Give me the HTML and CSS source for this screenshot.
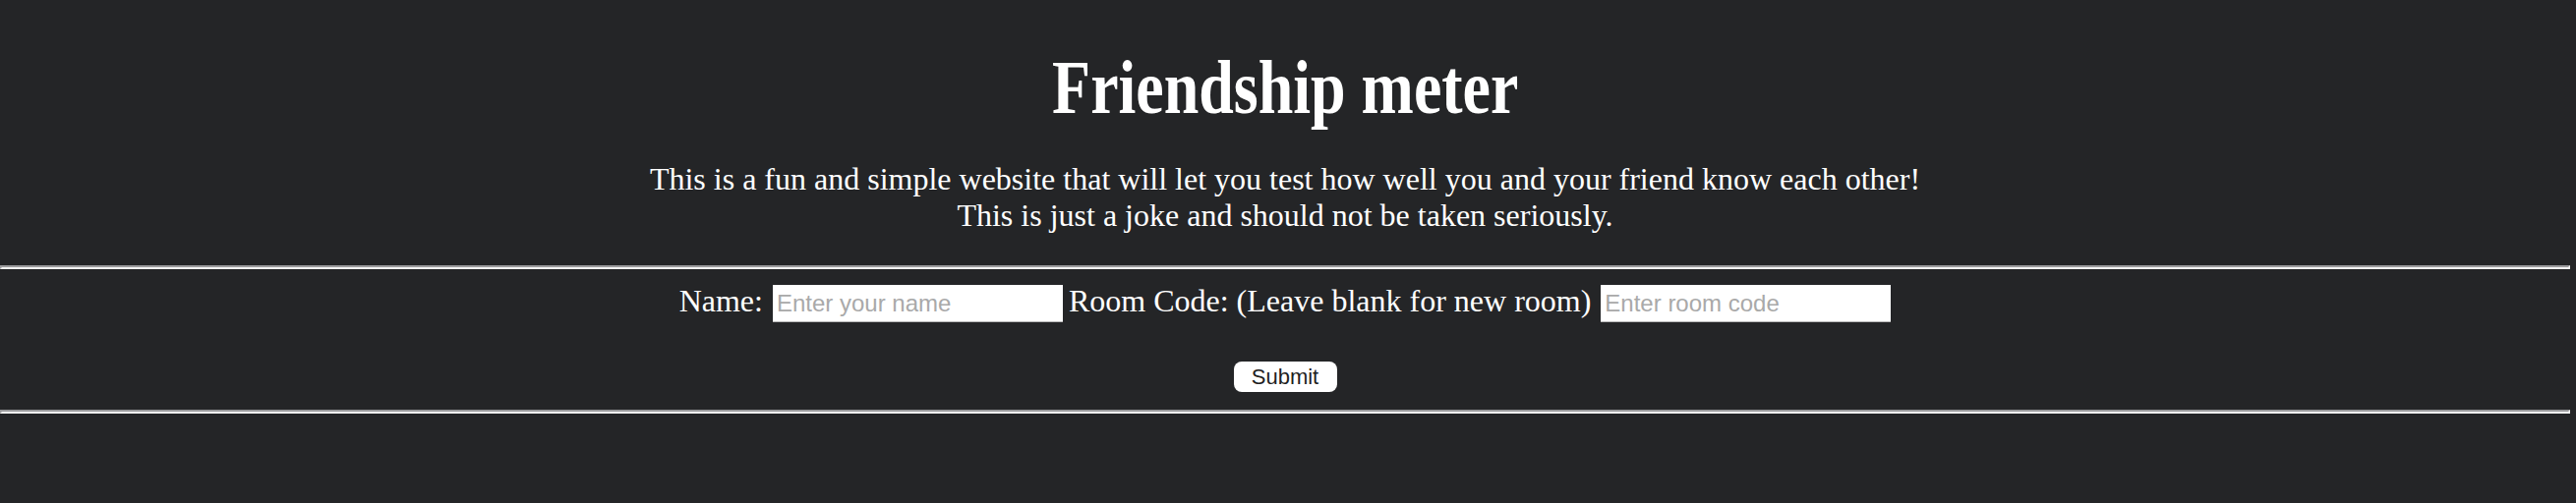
FILE: index.html
```html
<!DOCTYPE html>
<html lang="en">
<head>
<meta charset="utf-8">
<title>Friendship meter</title>
<link rel="stylesheet" href="styles.css">
</head>
<body>
<div class="page">
  <h1 class="title"><span class="title-text">Friendship meter</span></h1>
  <p class="intro">This is a fun and simple website that will let you test how well you and your friend know each other!<br>This is just a joke and should not be taken seriously.</p>
  <div class="rule"></div>
  <form class="form">
    <div class="fields">
      <label class="label" for="name">Name:</label>
      <input class="field" id="name" type="text" placeholder="Enter your name">
      <label class="label" for="room">Room Code: (Leave blank for new room)</label>
      <input class="field" id="room" type="text" placeholder="Enter room code">
    </div>
    <div class="actions">
      <button class="submit" type="button">Submit</button>
    </div>
  </form>
  <div class="rule rule-bottom"></div>
</div>
</body>
</html>
```
FILE: styles.css
```css
html, body {
  margin: 0;
  padding: 0;
  background: #242527;
}
body {
  color: #ffffff;
  font-family: "Liberation Serif", "Times New Roman", serif;
}
.page {
  width: 2614px;
  display: flex;
  flex-direction: column;
}
.title {
  margin: 49px 0 0 0;
  font-size: 78px;
  line-height: 80px;
  font-weight: bold;
  text-align: center;
}
.title-text {
  display: inline-block;
  transform: scaleX(0.82);
}
.intro {
  margin: 35px 0 0 0;
  font-size: 32px;
  line-height: 37px;
  text-align: center;
}
.rule {
  margin-top: 32px;
  height: 0;
  border-top: 2px solid #9b9b9d;
  border-bottom: 2px solid #f2f2f2;
  border-right: 2px solid #f2f2f2;
  border-left: 2px solid #9b9b9d;
}
.form {
  margin: 16px 0 0 0;
  display: flex;
  flex-direction: column;
  align-items: center;
}
.fields {
  display: flex;
  align-items: flex-start;
  height: 38px;
}
.label {
  font-size: 32px;
  line-height: 32px;
  white-space: nowrap;
}
.field {
  box-sizing: border-box;
  width: 295px;
  height: 38px;
  margin: 0 6px 0 10px;
  padding: 0 4px;
  border: none;
  box-shadow: inset 0 -1px 0 #b9b9b9;
  background: #ffffff;
  font-family: "Liberation Sans", Arial, sans-serif;
  font-size: 24px;
  color: #222;
  outline: none;
}
.field:last-child {
  margin-right: 0;
}
.field::placeholder {
  color: #a9a9a9;
}
.actions {
  margin-top: 40px;
  display: flex;
  justify-content: center;
}
.submit {
  box-sizing: border-box;
  width: 105px;
  height: 31px;
  padding: 0;
  border: none;
  border-radius: 8px;
  background: #ffffff;
  color: #1f1f1f;
  font-family: "Liberation Sans", Arial, sans-serif;
  font-size: 22px;
  line-height: 31px;
}
.rule-bottom {
  margin-top: 18px;
}
```
